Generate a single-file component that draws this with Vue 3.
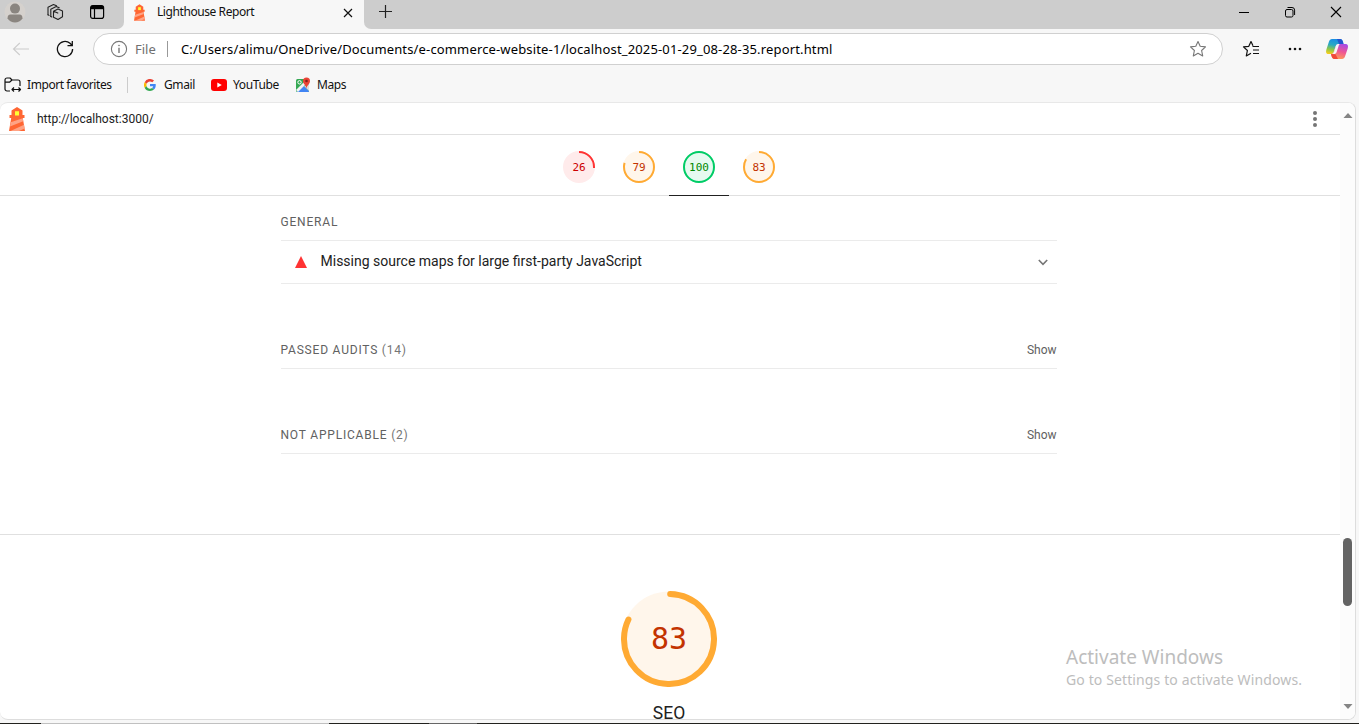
<script setup>
const gauges = [
  { score: 26, kind: 'fail' },
  { score: 79, kind: 'average' },
  { score: 100, kind: 'pass', active: true },
  { score: 83, kind: 'average' },
]
const clumps = [
  { title: 'PASSED AUDITS', count: 14, cls: 'passed' },
  { title: 'NOT APPLICABLE', count: 2, cls: 'na' },
]
const small = 2 * Math.PI * 15
const big = 2 * Math.PI * 45
</script>

<template>
  <div class="window">
    <svg class="defs" width="0" height="0">
      <defs>
        <symbol id="lighthouse" viewBox="0 0 16 24">
          <path d="M8 0 13.500 3.600V8h2v3h-1.700L16 24H0L2.200 11H.5V8h2V3.600Z" fill="#f63" />
          <path d="M6 4.300h4V8.500H6z" fill="#ff3" />
          <path d="m1.700 15.200 12-4 .5 3L1 19.400Z" fill="#ffa385" />
          <path d="m1.500 24 13.600-6.200.5 3.700L10 24Z" fill="#ffa385" />
        </symbol>
      </defs>
    </svg>

    <header class="tabs">
      <div class="tab-tools">
        <svg class="avatar" width="22" height="24" viewBox="0 0 22 24">
          <circle cx="11" cy="12" r="10.500" fill="#d5d1cd" />
          <circle cx="11" cy="8.600" r="5" fill="#8a8580" />
          <path d="M3.500 18.500c0-2.400 1-4 3-4h9c2 0 3 1.600 3 4-1.900 2.700-4.500 4-7.500 4s-5.600-1.300-7.500-4Z" fill="#8a8580" />
        </svg>
        <svg class="spaces" width="18" height="18" viewBox="0 0 18 18" fill="none" stroke="#222" stroke-width="1.100" stroke-linejoin="round" stroke-linecap="round">
          <path d="M7.500 8.300 12 6l4.500 2v5.800L12 16.500l-4.500-2.300ZM7.500 8.300l4.300 1.800" />
          <path d="M4.800 13.500V6.200l5.400-2.700 3 1.300M2 11.800V4.200L7.500 1.500l3 1.200" />
          <path d="m2 11.800 1 .6M4.800 13.500l1 .5" />
        </svg>
        <svg class="vertical" width="16" height="16" viewBox="0 0 16 16" fill="none" stroke="#000" stroke-width="1.200">
          <rect x="1.600" y="1.600" width="13" height="12.800" rx="2.200" />
          <path d="M2 3.500h12" stroke-width="3.400" />
          <path d="M5.500 4v10" />
        </svg>
      </div>
      <div class="tab">
        <svg class="tab-icon" width="11" height="17"><use href="#lighthouse" width="11" height="17" /></svg>
        <span class="tab-title">Lighthouse Report</span>
        <svg class="tab-close" width="10" height="10" viewBox="0 0 10 10" stroke="#111" stroke-width="1.200"><path d="m1 1 8 8M9 1 1 9" /></svg>
      </div>
      <svg class="new-tab" width="15" height="15" viewBox="0 0 15 15" stroke="#222" stroke-width="1.200"><path d="M7.500 1v13M1 7.500h13" /></svg>
      <div class="controls">
        <svg width="12" height="12" viewBox="0 0 12 12" fill="none" stroke="#000"><path d="M1 6.500h10" /></svg>
        <svg width="12" height="12" viewBox="0 0 12 12" fill="none" stroke="#000"><rect x="1.500" y="3.500" width="7.500" height="7.500" rx="1.500" /><path d="M3.500 1.500H8a2.600 2.600 0 0 1 2.600 2.600V9" /></svg>
        <svg width="12" height="12" viewBox="0 0 12 12" fill="none" stroke="#000" stroke-width="1.100"><path d="m1 1 10 10M11 1 1 11" /></svg>
      </div>
    </header>

    <div class="toolbar">
      <svg class="back" width="18" height="14" viewBox="0 0 18 14" fill="none" stroke="#ccc" stroke-width="1.100"><path d="M17 7H1.500M7.800 1 1.500 7l6.300 6" /></svg>
      <svg class="reload" width="18" height="18" viewBox="0 0 18 18" fill="none" stroke="#111" stroke-width="1.300"><path d="M16.600 9A7.600 7.600 0 1 1 14 3.300L16 5.300M16.300 1v4.700h-4.800" /></svg>
      <div class="address">
        <svg class="info" width="18" height="18" viewBox="0 0 18 18" fill="none" stroke="#777" stroke-width="1.100"><circle cx="9" cy="9" r="7.600" /><path d="M9 7.800V13" stroke-width="1.400" /><circle cx="9" cy="5.500" r=".6" fill="#777" stroke-width=".5" /></svg>
        <span class="file">File</span>
        <span class="bar"></span>
        <span class="url">C:/Users/alimu/OneDrive/Documents/e-commerce-website-1/localhost_2025-01-29_08-28-35.report.html</span>
        <svg class="star" width="18" height="18" viewBox="0 0 18 18" fill="none" stroke="#767676" stroke-width="1.100" stroke-linejoin="round"><path d="m9 1.500 2.200 4.800 5.300.6-3.900 3.600 1.100 5.400L9 13.200l-4.700 2.700 1.100-5.400L1.500 6.900l5.300-.6Z" /></svg>
      </div>
      <div class="actions">
        <svg class="favs" width="18" height="18" viewBox="0 0 18 18" fill="none" stroke="#111" stroke-width="1.200" stroke-linejoin="round"><path d="M11 5.800 9 1.500 6.800 6.300l-5.300.6 3.900 3.600-1.100 5.400L9 13.200M10.500 6.500h6.500M11 10h6M11 13.500h6" /></svg>
        <svg class="more" width="14" height="4" viewBox="0 0 14 4" fill="#111"><circle cx="2" cy="2" r="1.300" /><circle cx="7" cy="2" r="1.300" /><circle cx="12" cy="2" r="1.300" /></svg>
        <svg class="copilot" width="24" height="22" viewBox="0 0 24 22">
          <defs>
            <linearGradient id="coolside" x1=".5" y1="0" x2=".25" y2="1"><stop offset="0" stop-color="#188ce6" /><stop offset=".4" stop-color="#29a9c2" /><stop offset=".7" stop-color="#8bc64b" /><stop offset="1" stop-color="#f6ce1b" /></linearGradient>
            <linearGradient id="warmside" x1=".7" y1="0" x2=".4" y2="1"><stop offset="0" stop-color="#a64be7" /><stop offset=".5" stop-color="#ef5694" /><stop offset="1" stop-color="#ff9d55" /></linearGradient>
          </defs>
          <path d="M7 1h8c2 0 2.600 1.500 3 3l.5 2H14c-2 0-3 1-3.600 3l-1.700 5c-.5 1.500-1.200 2-2.700 2H3.500C1 16 .7 14 1.400 11.500L4 3.500C4.500 2 5.500 1 7 1Z" fill="url(#coolside)" />
          <path d="M12 1h3c2 0 2.600 1.500 3 3l.5 2H14z" fill="#2456ce" />
          <path d="M17 21H9.500C7.500 21 7 19.500 6.500 18L6 16c2 0 2.600-.7 3-2l1.500-5c.6-2 1.700-3 3.500-3h6.500c2.400 0 3 2 2.200 4.500L20 18.500c-.5 1.500-1.500 2.500-3 2.500Z" fill="url(#warmside)" />
          <path d="M11 7.500c.6-1.200 1.500-1.500 3.800-1.500-.6.500-.9 1-1.200 2l-2 6c-.5 1.500-1.200 2-2.800 2H7c1.200-.2 1.700-1 2-2Z" fill="#f7f7f7" />
          <path d="m6 16 4.500.2L13 21H9.500C7.500 21 7 19.500 6.500 18Z" fill="#ef4938" />
        </svg>
      </div>
    </div>

    <nav class="favorites">
      <svg class="import" width="18" height="18" viewBox="0 0 18 18" fill="none" stroke="#111" stroke-width="1.200" stroke-linejoin="round">
        <path d="M6 15H3a2 2 0 0 1-2-2V4a2 2 0 0 1 2-2h3l2 2h6a2 2 0 0 1 2 2v4M1 6.200h4.500L8 4M8 13.500h8.500M10 11.500 8 13.500l2 2M14.500 11.500l2 2-2 2" />
      </svg>
      <span class="t-import">Import favorites</span>
      <span class="fav-sep"></span>
      <svg class="g" width="12" height="12" viewBox="0 0 48 48">
        <path fill="#EA4335" d="M24 9.500c3.500 0 6.700 1.200 9.200 3.600l6.900-6.900A24 24 0 0 0 2.600 13.200l8 6.200C12.400 13.700 17.700 9.500 24 9.500Z" />
        <path fill="#4285F4" d="M47 24.500c0-1.600-.2-3.100-.4-4.500H24v9h12.900a11 11 0 0 1-4.700 7.200l7.700 6C44.400 38 47 31.800 47 24.500Z" />
        <path fill="#FBBC05" d="M10.500 28.600a14.500 14.500 0 0 1 0-9.200l-8-6.200a24 24 0 0 0 0 21.600Z" />
        <path fill="#34A853" d="M24 48c6.500 0 11.900-2.100 15.900-5.800l-7.700-6A14.300 14.300 0 0 1 10.500 28.600l-8 6.200A24 24 0 0 0 24 48Z" />
      </svg>
      <span class="t-gmail">Gmail</span>
      <svg class="yt" width="16" height="12" viewBox="0 0 16 12"><rect width="16" height="12" rx="3" fill="#f00" /><path d="m6.300 3.400 4.500 2.600-4.500 2.600Z" fill="#fff" /></svg>
      <span class="t-yt">YouTube</span>
      <svg class="map" width="16" height="16" viewBox="0 0 16 16">
        <rect x="1" y="2" width="13" height="13" rx="1.500" fill="#34a853" />
        <path d="m2 14 6-6 6 6c0 .6-.5 1-1 1H3c-.6 0-1-.4-1-1Z" fill="#4285f4" />
        <path d="m1 13 9-9 2 2-9 9Z" fill="#f1f3f4" />
        <path d="m9 9 5 5V7Z" fill="#dadce0" />
        <circle cx="4.500" cy="5.300" r="1.700" fill="none" stroke="#fff" />
        <path d="M11.500 11.500C11 8 8 7 8 4a3.500 3.500 0 0 1 7 0c0 3-3 4-3.500 7.500Z" fill="#ea4335" />
        <circle cx="11.500" cy="4" r="1.300" fill="#851f1a" />
      </svg>
      <span class="t-maps">Maps</span>
    </nav>

    <div class="card">
      <main class="report">
        <div class="topbar">
          <svg class="logo" width="16" height="24"><use href="#lighthouse" width="16" height="24" /></svg>
          <span class="page-url">http://localhost:3000/</span>
          <svg class="kebab" width="6" height="18" viewBox="0 0 6 18" fill="#757575"><circle cx="3" cy="3" r="2" /><circle cx="3" cy="9" r="2" /><circle cx="3" cy="15" r="2" /></svg>
        </div>

        <div class="sticky">
          <a v-for="(g, i) in gauges" :key="i" class="mini" :class="[g.kind, { active: g.active }]">
            <svg width="32" height="32" viewBox="0 0 32 32">
              <circle class="disc" cx="16" cy="16" r="16" />
              <circle class="arc" cx="16" cy="16" r="15" fill="none" stroke-width="2" :stroke-dasharray="`${small * g.score / 100} ${small}`" transform="rotate(-90 16 16)" />
            </svg>
            <span class="mini-score">{{ g.score }}</span>
          </a>
        </div>

        <section class="category">
          <h3 class="group">GENERAL</h3>
          <div class="audit">
            <svg class="triangle" width="12" height="12" viewBox="0 0 12 12"><path d="M6 0 12 12H0Z" fill="#f33" /></svg>
            <span class="audit-title">Missing source maps for large first-party JavaScript</span>
            <svg class="chevron" width="10" height="7" viewBox="0 0 10 7" fill="none" stroke="#757575" stroke-width="1.600"><path d="m.8 1 4.200 4.300L9.200 1" /></svg>
          </div>
          <div v-for="c in clumps" :key="c.title" class="clump" :class="c.cls">
            <span class="clump-title">{{ c.title }} <span class="count">({{ c.count }})</span></span>
            <span class="show">Show</span>
          </div>
        </section>

        <section class="seo">
          <div class="gauge average">
            <svg width="96" height="96" viewBox="0 0 96 96">
              <circle class="disc" cx="48" cy="48" r="47.500" />
              <circle class="arc" cx="48" cy="48" r="45" fill="none" stroke-width="6" stroke-linecap="round" :stroke-dasharray="`${big * .83 - 4} ${big}`" transform="rotate(-88.500 48 48)" />
            </svg>
            <span class="score">83</span>
          </div>
          <div class="seo-title">SEO</div>
        </section>
      </main>
      <div class="scrollbar">
        <svg width="10" height="5" viewBox="0 0 10 5"><path d="M5 0l4.500 5h-9Z" fill="#858585" /></svg>
        <span class="thumb"></span>
        <svg class="down" width="10" height="5" viewBox="0 0 10 5"><path d="M.5 0h9L5 5Z" fill="#858585" /></svg>
      </div>
    </div>
    <div class="taskline"><i class="seg a"></i><i class="seg b"></i><i class="seg c"></i><i class="seg d"></i><i class="seg e"></i></div>

    <div class="watermark">
      <div class="wm-title">Activate Windows</div>
      <div class="wm-sub">Go to Settings to activate Windows.</div>
    </div>
  </div>
</template>

<style>
body { overflow: hidden; }
</style>

<style scoped>
* { box-sizing: border-box; }
svg { display: block; flex: none; }
.window { position: relative; width: 1359px; height: 724px; display: flex; flex-direction: column; overflow: hidden; background: #f7f7f7; font-family: "Noto Sans", "Open Sans", sans-serif; font-size: 12px; color: #111; white-space: nowrap; }
.defs { position: absolute; }

.tabs { height: 29px; flex: none; display: flex; background: #f7f7f7; }
.tab-tools { width: 124px; display: flex; background: #cdcdcd; border-bottom-right-radius: 7px; }
.avatar { margin: 0 0 0 4px; }
.spaces { margin: 3px 0 0 20px; }
.vertical { margin: 4px 0 0 25px; }
.tab { width: 240px; display: flex; }
.tab-icon { margin: 4px 0 0 10px; }
.tab-title { margin-left: 12px; width: 98px; line-height: 24px; letter-spacing: -.42px; }
.tab-close { margin: 8px 0 0 88px; }
.new-tab { box-sizing: content-box; padding: 4px 0 10px 14px; background: #cdcdcd; border-bottom-left-radius: 7px; }
.controls { flex: 1; display: flex; justify-content: flex-end; gap: 34px; padding: 6px 17px 0 0; background: #cdcdcd; }

.toolbar { height: 39px; flex: none; display: flex; }
.back { margin: 13px 0 0 12px; }
.reload { margin: 11px 0 0 26px; }
.address { margin: 4px 0 0 19px; width: 1130px; height: 32px; display: flex; align-items: center; background: #fff; border: 1px solid #d0d0d0; border-radius: 16px; font-size: 13px; }
.info { margin-left: 16px; }
.file { margin-left: 7px; width: 23px; color: #707070; }
.bar { width: 1px; height: 16px; margin-left: 9px; background: #999; }
.url { margin-left: 13px; width: 660px; letter-spacing: .15px; color: #000; }
.star { margin-left: auto; margin-right: 15px; }
.actions { display: flex; }
.favs { margin: 11px 0 0 19px; }
.more { margin: 18px 0 0 28px; }
.copilot { margin: 9px 0 0 23px; }

.favorites { height: 34px; flex: none; display: flex; align-items: center; line-height: 16px; padding-bottom: 1px; }
.import { margin-left: 4px; }
.t-import { margin-left: 5px; width: 86px; letter-spacing: -.43px; }
.fav-sep { width: 1px; height: 16px; margin-left: 14px; background: #ccc; }
.g { margin-left: 16px; }
.t-gmail { margin-left: 8px; width: 32px; letter-spacing: -.4px; }
.yt { margin-left: 15px; }
.t-yt { margin-left: 6px; width: 47px; letter-spacing: -.38px; }
.map { margin-left: 15px; }
.t-maps { margin-left: 6px; letter-spacing: -.4px; }

.card { width: 1356px; height: 618px; flex: none; display: flex; background: #fff; border: 1px solid #ddd; border-top-color: #e8e8e8; border-left: 0; border-radius: 8px; overflow: hidden; }
.report { width: 1340px; font-family: Roboto, "Liberation Sans", sans-serif; color: #212121; }
.topbar { height: 32px; display: flex; border-bottom: 1px solid #e0e0e0; }
.logo { margin: 4px 0 0 9px; }
.page-url { margin-left: 12px; line-height: 32px; }
.kebab { margin: 7px 22px 0 auto; }
.sticky { height: 61px; display: flex; justify-content: center; padding-right: 2px; border-bottom: 1px solid #e0e0e0; }
.mini { width: 60px; height: 61px; display: grid; justify-items: center; padding-top: 16px; grid-template-rows: 32px; }
.mini.active { border-bottom: 1px solid #212121; }
.mini svg, .mini-score { grid-area: 1 / 1; }
.mini-score { align-self: center; font: 11px/33px "DejaVu Sans Mono", monospace; }
.fail .disc { fill: #ffebeb; } .fail .arc { stroke: #f33; } .fail { color: #c00; }
.average .disc { fill: #fff6eb; } .average .arc { stroke: #fa3; } .average { color: #c33300; }
.pass .disc { fill: #e6faf0; } .pass .arc { stroke: #0c6; } .pass { color: #080; }

.category { height: 339px; padding-left: 280.5px; padding-right: 283px; border-bottom: 1px solid #e0e0e0; }
.group { margin: 0; height: 45px; padding-top: 18px; font-size: 12px; line-height: 16px; font-weight: 400; letter-spacing: .8px; color: #616161; border-bottom: 1px solid #ebebeb; }
.audit { height: 43px; display: flex; border-bottom: 1px solid #ebebeb; }
.triangle { margin: 15px 0 0 14.5px; }
.audit-title { margin-left: 13.5px; font-size: 14px; line-height: 41px; }
.chevron { margin: 18px 9px 0 auto; }
.clump { display: flex; justify-content: space-between; align-items: flex-end; padding-bottom: 9px; line-height: 17px; color: #616161; border-bottom: 1px solid #ebebeb; }
.passed, .na { height: 85px; }
.clump-title { letter-spacing: .8px; }
.show { margin-right: .5px; }
.count { color: #757575; }
.seo { display: flex; flex-direction: column; align-items: center; padding: 56px 2px 0 0; }
.gauge { display: grid; place-items: center; }
.gauge svg, .score { grid-area: 1 / 1; }
.score { font: 30px/96px "DejaVu Sans Mono", monospace; }
.seo-title { margin-top: 16px; font-size: 17.5px; line-height: 20px; }

.scrollbar { width: 15px; display: flex; flex-direction: column; align-items: center; padding-top: 10px; background: #fcfcfc; }
.thumb { width: 9px; height: 68px; margin-top: 420px; border-radius: 5px; background: #636363; }
.down { margin-top: 98px; }
.taskline { height: 1px; margin-top: 3px; flex: none; display: flex; }
.seg { height: 1px; background: #22221e; }
.a { width: 41px; } .b { width: 288px; background: #c0c0c0; } .c { width: 100px; } .d { width: 48px; background: #666; } .e { flex: 1; }

.watermark { position: absolute; left: 1066px; top: 645px; color: #bdbdbd; }
.wm-title { font-size: 19px; line-height: 24px; }
.wm-sub { font-size: 14px; line-height: 21px; letter-spacing: .12px; }
</style>
